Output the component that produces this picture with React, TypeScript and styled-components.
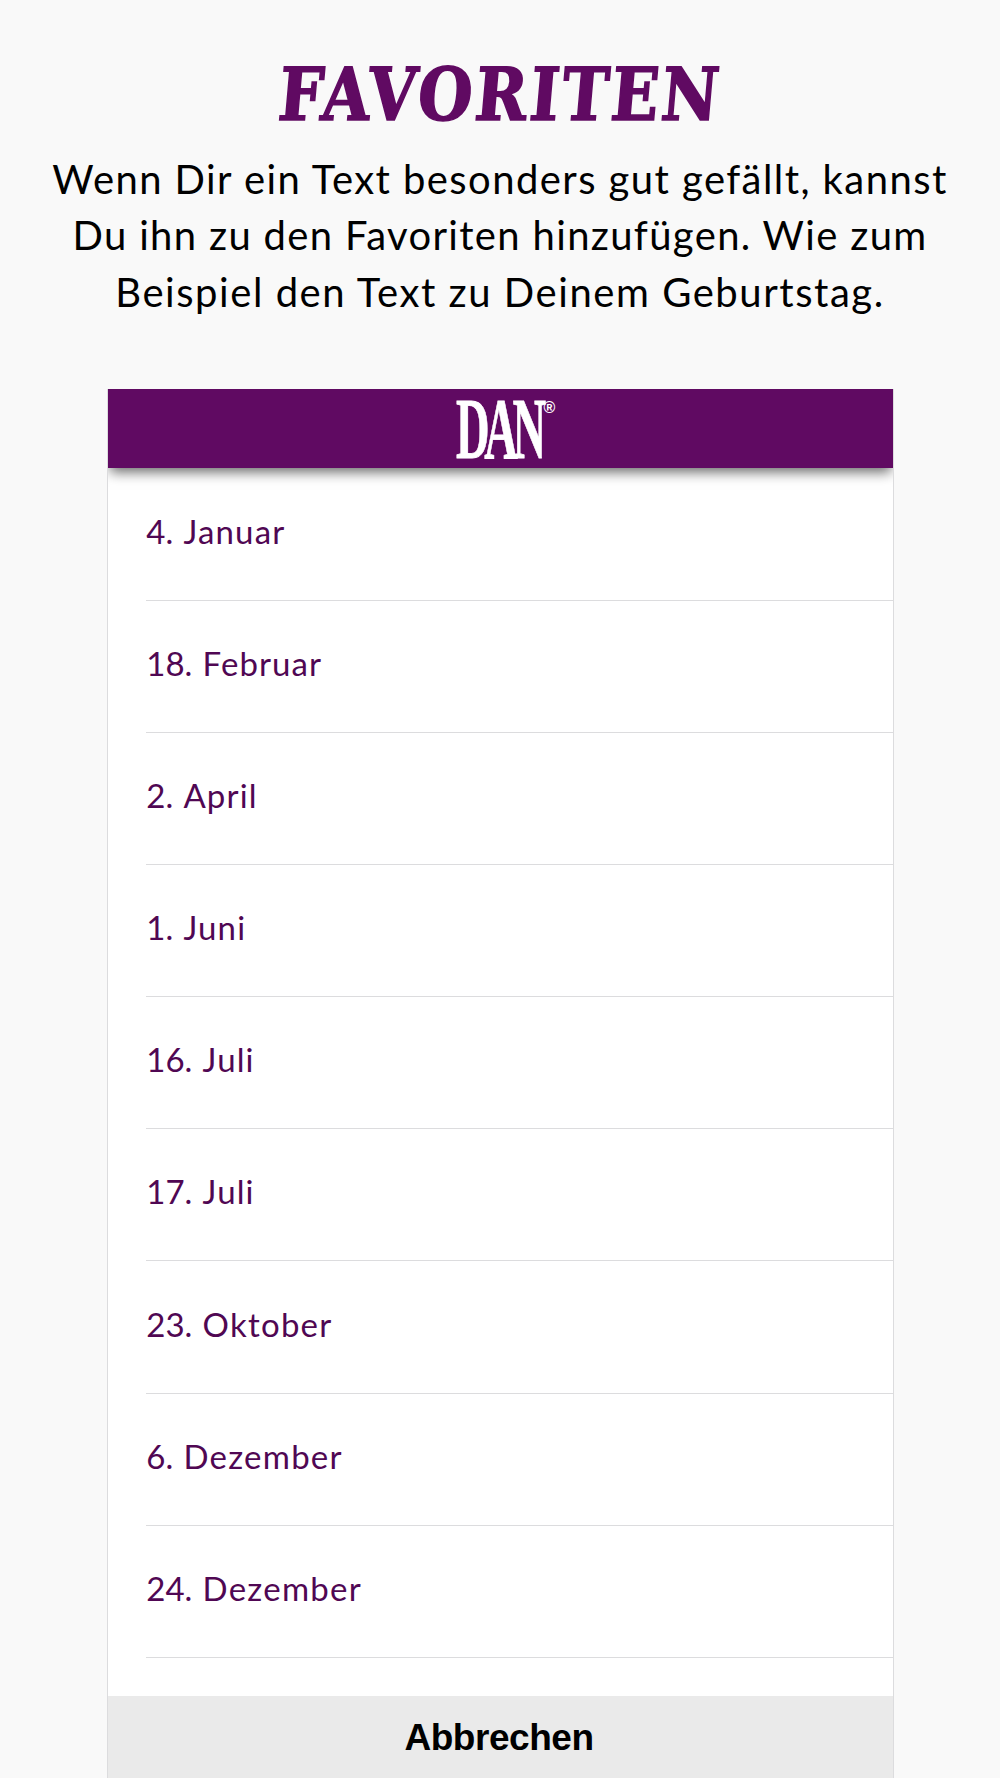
import React from "react";
import styled, { createGlobalStyle } from "styled-components";

const GlobalStyle = createGlobalStyle`
  *, *::before, *::after { box-sizing: border-box; }
  body { margin: 0; background: #f9f9f9; }
`;

const Page = styled.main`
  display: flex;
  flex-direction: column;
  align-items: center;
  width: 1000px;
  height: 1778px;
  padding-top: 51px;
  overflow: hidden;
  background: #f9f9f9;
  font-family: Lato, "Open Sans", sans-serif;
`;

const Title = styled.h1`
  margin: 0 4px 0 0;
  height: 98px;
  font: 700 73px/86px "DejaVu Serif Condensed", "DejaVu Serif", serif;
  font-stretch: condensed;
  letter-spacing: 3px;
  color: #600a62;
  -webkit-text-stroke: 1.6px #600a62;
  white-space: nowrap;
  transform-origin: 50% 69px;
  transform: skewX(-5deg) scaleX(0.95);
`;

const Intro = styled.p`
  display: flex;
  flex-direction: column;
  align-items: center;
  margin: 0;
  height: 240px;
  padding-top: 2px;
  font-size: 40px;
  line-height: 56.4px;
  color: #000;
`;

const IntroLine = styled.span<{ $tracking: number }>`
  letter-spacing: ${(p) => p.$tracking}px;
  white-space: nowrap;
`;

const Panel = styled.section`
  display: flex;
  flex-direction: column;
  flex: 1;
  width: 787px;
  min-height: 0;
  border: solid #dcdcde;
  border-width: 0 1px;
  background: #fff;
  overflow: hidden;
`;

const Header = styled.header`
  display: flex;
  justify-content: center;
  flex: none;
  height: 79px;
  padding-left: 9px;
  background: #600a62;
  box-shadow: 0 6px 12px -2px rgba(0, 0, 0, 0.6);
`;

const LogoMark = styled.svg`
  display: block;
  overflow: visible;
  fill: #fff;
  stroke: #fff;
`;

const List = styled.ul`
  flex: 1;
  min-height: 0;
  margin: 0;
  padding: 0.9px 0 0 38px;
  list-style: none;
`;

const Row = styled.li`
  display: flex;
  align-items: center;
  gap: 10.2px;
  height: 132.1px;
  padding: 0 0 7px 0.8px;
  border-bottom: 1px solid #dcdcde;
  font-size: 33px;
  line-height: 40px;
  color: #500753;
`;

const Month = styled.span<{ $tracking: number }>`
  letter-spacing: ${(p) => p.$tracking}px;
`;

const Cancel = styled.button`
  flex: none;
  height: 82px;
  padding: 1px 2px 0 0;
  border: 0;
  background: #eaeaea;
  font: 700 37px/42px "Liberation Sans", Arial, sans-serif;
  letter-spacing: -0.45px;
  color: #000;
`;

const intro = [
  { text: "Wenn Dir ein Text besonders gut gefällt, kannst", tracking: 1.43 },
  { text: "Du ihn zu den Favoriten hinzufügen. Wie zum", tracking: 1.34 },
  { text: "Beispiel den Text zu Deinem Geburtstag.", tracking: 1.55 },
];

const favorites = [
  { day: "4.", month: "Januar", tracking: 1.2 },
  { day: "18.", month: "Februar", tracking: 1.1 },
  { day: "2.", month: "April", tracking: 1.15 },
  { day: "1.", month: "Juni", tracking: 1.15 },
  { day: "16.", month: "Juli", tracking: 1.1 },
  { day: "17.", month: "Juli", tracking: 1.1 },
  { day: "23.", month: "Oktober", tracking: 1.25 },
  { day: "6.", month: "Dezember", tracking: 1.25 },
  { day: "24.", month: "Dezember", tracking: 1.25 },
];

const Logo = () => (
  <LogoMark width="110" height="79" viewBox="0 0 110 79" aria-label="DAN">
    <text
      transform="translate(6 68.5) scale(0.535 1)"
      fontFamily="'Liberation Serif', serif"
      fontWeight="700"
      fontSize="87"
      letterSpacing="-10"
      strokeWidth="0.8"
    >
      DAN
    </text>
    <text x="93.4" y="23.6" fontFamily="'Liberation Sans', sans-serif" fontWeight="700" fontSize="16" stroke="none">
      ®
    </text>
  </LogoMark>
);

export default function App() {
  return (
    <>
      <GlobalStyle />
      <Page>
        <Title>FAVORITEN</Title>
        <Intro>
          {intro.map((line) => (
            <IntroLine key={line.text} $tracking={line.tracking}>{line.text}</IntroLine>
          ))}
        </Intro>
        <Panel>
          <Header><Logo /></Header>
          <List>
            {favorites.map((f) => (
              <Row key={f.day + f.month}>
                <span>{f.day}</span>
                <Month $tracking={f.tracking}>{f.month}</Month>
              </Row>
            ))}
          </List>
          <Cancel type="button">Abbrechen</Cancel>
        </Panel>
      </Page>
    </>
  );
}
